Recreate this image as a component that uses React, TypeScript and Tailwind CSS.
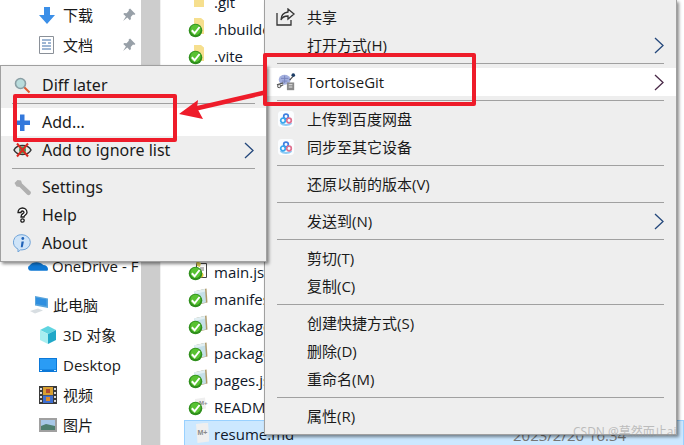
import React from "react";

const cjk = "font-['Open_Sans','Noto_Sans_CJK_SC',sans-serif]";

// --- icons ---
function Chevron({ color = "#24487c" }: { color?: string }) {
  return (
    <svg width="11" height="17" viewBox="0 0 11 17" fill="none">
      <path d="M1 1l8 7.500L1 16" stroke={color} strokeWidth="1.3" />
    </svg>
  );
}

function Pin() {
  return (
    <svg width="14" height="14" viewBox="0 0 13 13">
      <path d="M7.500.5l5 5-1.200 1-1-.4-2.200 2.200.2 2-1 1-2.400-2.500L1 12l2.600-4-2.400-2.400 1-1 2 .2 2.200-2.200-.3-1z" fill="#98a0a8" />
    </svg>
  );
}

type FileKind = "folder" | "json" | "md" | "main";

function FileIcon({ kind = "json", check = true }: { kind?: FileKind; check?: boolean }) {
  return (
    <svg width="21" height="21" viewBox="0 0 21 21">
      {kind === "folder" && <path d="M6 0h7l3 2.500V16H6z" fill="#f6df8e" />}
      {kind === "json" && (
        <>
          <path d="M8 3L18.500.5l1 14-9 2z" fill="#b09a6a" />
          <path d="M6 3.500L17 1l1 13.500-11 2z" fill="#c4dfe8" />
          <path d="M6 3.500L17 1l.2 2.500L7 6z" fill="#e2eff2" />
        </>
      )}
      {kind === "main" && (
        <>
          <path d="M8.500 2.500h10v14h-10z" fill="#fff" stroke="#444" />
          <path d="M8 0l5 2-1 4-3-1z" fill="#d9c84e" />
          <path d="M12 7h4M12 9h4" stroke="#777" />
          <circle cx="13" cy="14" r="2.500" fill="#e2c93a" />
        </>
      )}
      {kind === "md" && (
        <>
          <path d={check ? "M7 3l10-1.500 1 11-10 2z" : "M8 1l12-1.500 1.500 19-12 1.500z"} fill="#efefef" />
          <text x={check ? 11 : 9.5} y={check ? 9 : 12} fontSize={check ? 6 : 7} fontWeight="700" fill="#8a8a8a" fontFamily="'Liberation Sans',sans-serif">
            M+
          </text>
        </>
      )}
      {check && (
        <>
          <circle cx="7.500" cy="12.500" r="6.800" fill="#2f8f1c" />
          <circle cx="7.500" cy="11.800" r="5.200" fill="#58c232" />
          <path d="M3.800 12.300l2.800 3 5-6.300" stroke="#fff" strokeWidth="2" fill="none" />
        </>
      )}
    </svg>
  );
}

function Baidu() {
  return (
    <svg width="16" height="16" viewBox="0 0 16 16" fill="none">
      <rect width="16" height="16" rx="3.500" fill="#fbfdff" />
      <path d="M2.500 12c3 2.600 8 2.600 11 0" stroke="#8fcbf5" strokeWidth="2" />
      <circle cx="8" cy="5.500" r="2.300" stroke="#3f7fe0" strokeWidth="1.700" />
      <circle cx="5" cy="9.500" r="2.300" stroke="#39a6ee" strokeWidth="1.700" />
      <circle cx="11" cy="9.500" r="2.300" stroke="#e0708f" strokeWidth="1.700" />
    </svg>
  );
}

function Tortoise() {
  return (
    <svg width="20" height="20" viewBox="0 0 22 20">
      <ellipse cx="9.500" cy="7.500" rx="6.500" ry="5.500" fill="#a3afde" />
      <path d="M5.500 6h8M6.500 9h6M9.500 3v8" stroke="#7682bc" />
      <circle cx="19" cy="2.500" r="2" fill="#1d3d66" />
      <path d="M15 8l3.500-4" stroke="#444" strokeWidth="1.200" />
      <path d="M1 13l7-2M2 16l6-3" stroke="#555" strokeWidth="1.300" />
      <circle cx="3.500" cy="14.500" r="1.800" fill="#e8e8e8" stroke="#555" />
      <path d="M12 10.500h8V19h-8z" fill="#8a8a8a" />
      <path d="M14 13h4M14 15.500h4" stroke="#efefef" />
    </svg>
  );
}

const icons: Record<string, React.ReactNode> = {
  diff: (
    <svg width="17" height="17" viewBox="0 0 17 17" fill="none">
      <path d="M10 10l5.500 5.500" stroke="#dd5a30" strokeWidth="2" />
      <circle cx="6.500" cy="6.500" r="5" fill="#b9dcdc" stroke="#8a9ea4" strokeWidth="1.600" />
    </svg>
  ),
  add: (
    <svg width="16" height="17" viewBox="0 0 16 17">
      <path d="M6 .5h4.500v6H16v4.500h-5.500v6H6v-6H.5V6.500H6z" fill="#3378dc" />
    </svg>
  ),
  ignore: (
    <svg width="19" height="16" viewBox="0 0 19 16" fill="none">
      <path d="M1 8c3-6 14-6 17 0-3 6-14 6-17 0z" fill="#e8e8e8" stroke="#333" strokeWidth="1.500" />
      <circle cx="9.500" cy="8" r="3.500" fill="#4a9a50" />
      <path d="M4 1.500l11 13M15 1.500L4 14.500" stroke="#d82a20" strokeWidth="2" />
    </svg>
  ),
  settings: (
    <svg width="17" height="17" viewBox="0 0 17 17">
      <path d="M.5 4L3.500 1l3.500.5 1 3 8 7.500a2.200 2.200 0 01-3 3.500L5.500 8l-3-.5z" fill="#b0b0b0" />
    </svg>
  ),
  help: (
    <svg width="11" height="16" viewBox="0 0 11 16" fill="none">
      <path d="M1 5.500a4.500 4.500 0 119 0c0 2.500-3 2.500-3 4.500H4c0-3.500 3-3.500 3-4.500a1.500 1.500 0 00-3 0z" fill="#fff" stroke="#1a1a1a" strokeWidth="1.300" />
      <circle cx="5.500" cy="13.500" r="1.700" fill="#fff" stroke="#1a1a1a" strokeWidth="1.300" />
    </svg>
  ),
  about: (
    <svg width="18" height="18" viewBox="0 0 18 18">
      <path d="M9 .7a8.300 7.600 0 110 15.200H7.500L5 18v-2.900A8.300 7.600 0 019 .7z" fill="#cfe4f8" stroke="#6fa3d8" />
      <circle cx="9.800" cy="4.500" r="1.400" fill="#1f62b8" />
      <path d="M8.500 7.500h2.400l-1.200 5.800H7.800z" fill="#1f62b8" />
    </svg>
  ),
  share: (
    <svg width="20" height="18" viewBox="0 0 20 18" fill="none" stroke="#333" strokeWidth="1.300">
      <path d="M1 5v12h14v-5" />
      <path d="M12 1l6 5-6 5V8C8 8 6 9.500 5 12c0-5 3-7.500 7-8z" />
    </svg>
  ),
};

// --- explorer behind the menus ---
function NavRow({ icon, label, pinned, indent = "pl-[39px]" }: { icon: React.ReactNode; label: string; pinned?: boolean; indent?: string }) {
  return (
    <div className={`relative flex h-[30px] items-center whitespace-nowrap ${indent}`}>
      <span className="flex w-[24px] shrink-0 items-center">{icon}</span>
      <span>{label}</span>
      {pinned && (
        <span className="absolute left-[122px]">
          <Pin />
        </span>
      )}
    </div>
  );
}

function FileRow({ name, kind, check, selected }: { name: string; kind: FileKind; check?: boolean; selected?: boolean }) {
  return (
    <div className={`flex h-[27px] items-center border pl-[3px] ${selected ? "border-[#99d1ff] bg-[#cce8ff]" : "border-transparent"}`}>
      <span className="flex w-[26px] shrink-0 items-center">
        <FileIcon kind={kind} check={check} />
      </span>
      <span className="whitespace-nowrap text-[#10182a]">{name}</span>
    </div>
  );
}

// --- context menus ---
function MenuRow({ icon, label, arrow, hot, textLeft }: { icon?: React.ReactNode; label: string; arrow?: boolean; hot?: boolean; textLeft: string }) {
  return (
    <div className={`relative flex h-7 items-center ${textLeft} ${hot ? "bg-white" : ""}`}>
      {icon && <span className="absolute left-[10px] flex w-[22px] items-center justify-center">{icon}</span>}
      <span className="text-[#1a1a1a]">{label}</span>
      {arrow && (
        <span className="absolute right-[11px] flex items-center">
          <Chevron color={hot ? "#4a2a48" : undefined} />
        </span>
      )}
    </div>
  );
}

function Sep({ inset }: { inset: string }) {
  return <div className={`my-1 h-px bg-[#a0a0a0] ${inset}`} />;
}

export default function App() {
  return (
    <div className={`relative flex h-[445px] w-[684px] overflow-hidden bg-white text-[15px] leading-5 text-[#1a1a1a] ${cjk}`}>
      {/* nav pane */}
      <div className="w-[141px] shrink-0 overflow-hidden">
        <NavRow
          pinned
          label="下载"
          icon={
            <svg width="16" height="17" viewBox="0 0 16 17">
              <path d="M5 0h6v8h5l-8 9-8-9h5z" fill="#3b8fe8" />
            </svg>
          }
        />
        <NavRow
          pinned
          label="文档"
          icon={
            <svg width="15" height="18" viewBox="0 0 15 18">
              <path d="M.5.500h14v17H.5z" fill="#fff" stroke="#8a9098" />
              <path d="M3 4h9M3 7h4M9 7h3M3 10h9M3 13h9" stroke="#3f6fa8" />
            </svg>
          }
        />
        <div className="h-[191px]" />
        <NavRow
          indent="pl-[28px]"
          label="OneDrive - F"
          icon={
            <svg width="20" height="9" viewBox="0 0 21 9">
              <path d="M3 9a3 3 0 01-1-5.800C3 1 6 0 9 0c3 0 5 1 7 3 3 0 5 2 5 4s-1 2-2 2z" fill="#0f78d4" />
            </svg>
          }
        />
        <div className="mt-[9px]">
          <NavRow
            indent="pl-[29px]"
            label="此电脑"
            icon={
              <svg width="20" height="18" viewBox="0 0 20 18">
                <path d="M6 0l13 2.500v9.500L6 9.500z" fill="#5aa5dc" />
                <path d="M7 1.500l10.500 2v6.500L7 8z" fill="#2f8fe0" />
                <path d="M1 15l8-2.500 5 2-8 3z" fill="#d8dee2" />
              </svg>
            }
          />
        </div>
        <NavRow
          label="3D 对象"
          icon={
            <svg width="18" height="18" viewBox="0 0 17 18">
              <path d="M8.500 0l8 4-8 4-8-4z" fill="#5fd4e0" />
              <path d="M.5 4l8 4v10l-8-4z" fill="#a8eef0" />
              <path d="M16.500 4l-8 4v10l8-4z" fill="#20a8c8" />
            </svg>
          }
        />
        <NavRow
          label="Desktop"
          icon={
            <svg width="18" height="14" viewBox="0 0 18 14">
              <path d="M0 0h18v14H0z" fill="#0b78d8" />
              <path d="M1 1h16v10.500H1z" fill="#2a9cf5" />
              <path d="M1 12h2v1H1zM15 12h2v1h-2z" fill="#d0ecff" />
            </svg>
          }
        />
        <NavRow
          label="视频"
          icon={
            <svg width="18" height="18" viewBox="0 0 18 18">
              <path d="M0 0h18v18H0z" fill="#3a3a3a" />
              <path d="M4 1h10v8H4z" fill="#d8a030" />
              <path d="M7 3h4v4H7z" fill="#b04a30" />
              <path d="M4 9.500h10V17H4z" fill="#3f6fd0" />
              <path d="M7 11h4v4H7z" fill="#d88a30" />
              <path d="M1 2h2v2H1zM1 6h2v2H1zM1 10h2v2H1zM1 14h2v2H1zM15 2h2v2h-2zM15 6h2v2h-2zM15 10h2v2h-2zM15 14h2v2h-2z" fill="#ddd" />
            </svg>
          }
        />
        <NavRow
          label="图片"
          icon={
            <svg width="18" height="14" viewBox="0 0 18 14">
              <path d="M1 1h16v12H1z" fill="#fff" stroke="#a0a0a0" strokeWidth="2" />
              <path d="M2 2h14v6H2z" fill="#a8c8e8" />
              <path d="M2 8l5-2 9 2v4H2z" fill="#4f7f70" />
            </svg>
          }
        />
      </div>

      {/* scrollbar track */}
      <div className="w-[19px] shrink-0 bg-[#cdcdcd]" />
      <div className="w-[3px] shrink-0 border-l border-[#f0f0f0]" />

      {/* file list */}
      <div className="-mt-[12px] ml-[21px] flex-1">
        <FileRow name=".git" kind="folder" check={false} />
        <FileRow name=".hbuilderx" kind="folder" />
        <FileRow name=".vite" kind="folder" />
        <div className="h-[189px]" />
        <FileRow name="main.js" kind="main" />
        <FileRow name="manifest.json" kind="json" />
        <FileRow name="package.json" kind="json" />
        <FileRow name="package-lock.json" kind="json" />
        <FileRow name="pages.json" kind="json" />
        <FileRow name="README.md" kind="md" />
        <FileRow name="resume.md" kind="md" check={false} selected />
      </div>

      {/* date column of the selected row, mostly behind the menu */}
      <span className="absolute left-[513px] top-[425px] text-[#777]">2023/2/20 16:34</span>

      {/* shell context menu */}
      <div className="absolute left-[264px] top-0 h-[435px] w-[413px] border border-t-0 border-[#a0a0a0] bg-[#eeeeee] pt-[3px] shadow-[2px_2px_3px_rgba(0,0,0,0.45)]">
        <MenuRow textLeft="pl-[42px]" icon={icons.share} label="共享" />
        <MenuRow textLeft="pl-[42px]" label="打开方式(H)" arrow />
        <Sep inset="mx-3" />
        <MenuRow textLeft="pl-[42px]" icon={<Tortoise />} label="TortoiseGit" arrow hot />
        <Sep inset="mx-3" />
        <MenuRow textLeft="pl-[42px]" icon={<Baidu />} label="上传到百度网盘" />
        <MenuRow textLeft="pl-[42px]" icon={<Baidu />} label="同步至其它设备" />
        <Sep inset="mx-3" />
        <MenuRow textLeft="pl-[42px]" label="还原以前的版本(V)" />
        <Sep inset="mx-3" />
        <MenuRow textLeft="pl-[42px]" label="发送到(N)" arrow />
        <Sep inset="mx-3" />
        <MenuRow textLeft="pl-[42px]" label="剪切(T)" />
        <MenuRow textLeft="pl-[42px]" label="复制(C)" />
        <Sep inset="mx-3" />
        <MenuRow textLeft="pl-[42px]" label="创建快捷方式(S)" />
        <MenuRow textLeft="pl-[42px]" label="删除(D)" />
        <MenuRow textLeft="pl-[42px]" label="重命名(M)" />
        <Sep inset="mx-3" />
        <MenuRow textLeft="pl-[42px]" label="属性(R)" />
      </div>

      {/* tortoisegit submenu */}
      <div className="absolute left-0 top-[65px] h-[197px] w-[267px] border border-[#a0a0a0] bg-[#eeeeee] pt-[5px] text-[16px] shadow-[2px_2px_3px_rgba(0,0,0,0.45)] font-['Noto_Sans',sans-serif]">
        <MenuRow textLeft="pl-[41px]" icon={icons.diff} label="Diff later" />
        <Sep inset="mx-[11px]" />
        <MenuRow textLeft="pl-[41px]" icon={icons.add} label="Add..." hot />
        <MenuRow textLeft="pl-[41px]" icon={icons.ignore} label="Add to ignore list" arrow />
        <Sep inset="mx-[11px]" />
        <MenuRow textLeft="pl-[41px]" icon={icons.settings} label="Settings" />
        <MenuRow textLeft="pl-[41px]" icon={icons.help} label="Help" />
        <MenuRow textLeft="pl-[41px]" icon={icons.about} label="About" />
      </div>

      {/* annotations */}
      <div className="absolute left-[13px] top-[94px] h-[48px] w-[164px] rounded-[2px] border-4 border-[#ee1c2a]" />
      <div className="absolute left-[263px] top-[53px] h-[53px] w-[213px] rounded-[2px] border-4 border-[#ee1c2a]" />
      <svg className="absolute left-[176px] top-[88px]" width="92" height="34" viewBox="0 0 92 34">
        <path d="M89 4.500L20 20.500" stroke="#ee1c2a" strokeWidth="4.500" />
        <path d="M3 26l19-14-1 8 6 11z" fill="#ee1c2a" />
      </svg>

      {/* watermark */}
      <span className="absolute left-[573px] top-[422px] text-[12px] text-[#9a9a9a] opacity-60">CSDN @莫然而止ai</span>
    </div>
  );
}
